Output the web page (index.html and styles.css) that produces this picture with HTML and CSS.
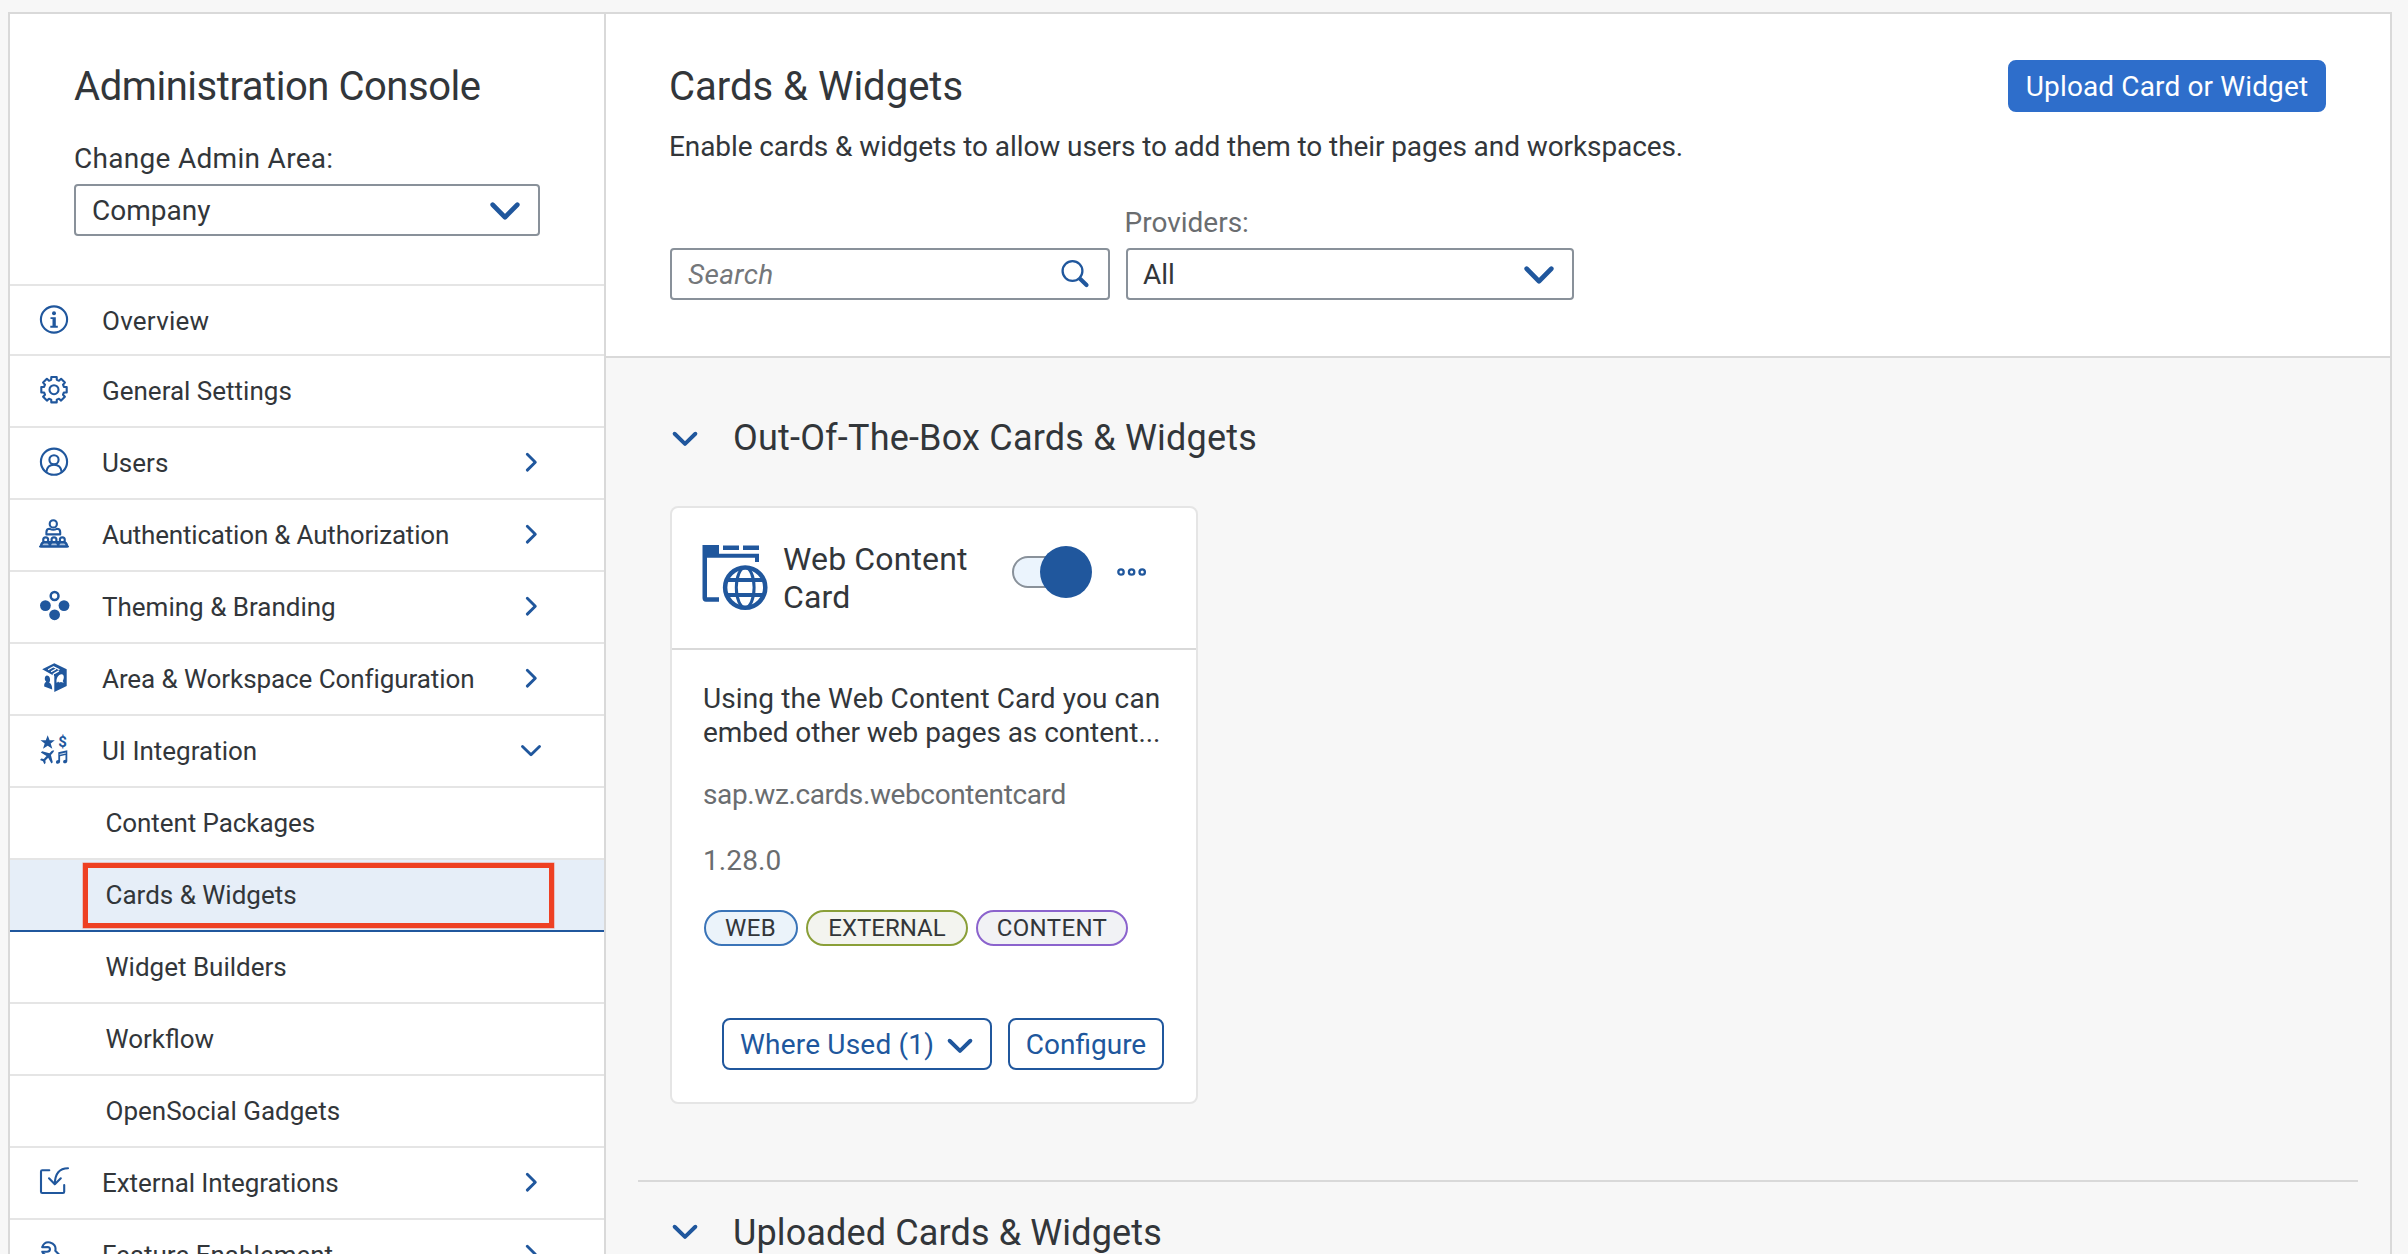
FILE: index.html
```
<!DOCTYPE html>
<html lang="en">
<head>
<meta charset="utf-8">
<title>Administration Console</title>
<link rel="stylesheet" href="styles.css">
</head>
<body>
<svg class="sprite" aria-hidden="true">
  <symbol id="chevron-down" viewBox="0 0 32 32"><path d="M7.5 12.5 16 20.8l8.500-8.300"/></symbol>
  <symbol id="chevron-right" viewBox="0 0 32 32"><path d="m12.300 8.300 8 7.900-8 7.900"/></symbol>
</svg>
<div class="shell">
  <aside class="sidebar">
    <header class="side-head">
      <h1 class="title side-title">Administration Console</h1>
      <label class="area-label">Change Admin Area:</label>
      <div class="field area-select"><span>Company</span>
        <svg class="drop"><use href="#chevron-down"/></svg></div>
    </header>
    <nav class="nav">
      <a class="item first">
        <svg class="icon" viewBox="0 0 32 32"><circle cx="16" cy="16.500" r="13.100"/><circle class="solid" cx="16" cy="10.300" r="2"/><path class="solid" d="M12.500 14.200h5.300v8.600h2v1.900h-7.500v-1.900h2.200v-6.700h-2z"/></svg>
        <span>Overview</span></a>
      <a class="item">
        <svg class="icon" viewBox="-16 -15.700 32 32"><circle r="4.500"/><path d="M9.900-2.800 12.700-2.700V2.700L9.900 2.800 9 5 10.900 7.100 7.100 10.900 5 9 2.800 9.900 2.700 12.700H-2.700L-2.800 9.900-5 9-7.100 10.900-10.900 7.100-9 5-9.900 2.800-12.700 2.700V-2.700L-9.900-2.800-9-5-10.900-7.100-7.100-10.900-5-9-2.800-9.900-2.700-12.700H2.700L2.800-9.900 5-9 7.100-10.900 10.900-7.100 9-5Z"/></svg>
        <span>General Settings</span></a>
      <a class="item">
        <svg class="icon" viewBox="0 0 32 32"><circle cx="16" cy="15.700" r="13.100"/><circle cx="16" cy="13.800" r="4.600"/><path d="M8.300 26c.6-4.500 3.600-7.200 7.700-7.200s7.100 2.700 7.700 7.200"/></svg>
        <span>Users</span><svg class="chev"><use href="#chevron-right"/></svg></a>
      <a class="item">
        <svg class="icon" viewBox="0 0 32 32"><circle cx="15.300" cy="5.900" r="3.600"/><path d="M8.400 16.400v-2.200q0-3.400 3.400-3.400 3.500 2 7 0 3.400 0 3.400 3.400v2.200z"/><path class="tint" d="M3 28.500q.3-4 3-4.500h20q2.700.5 3 4.500z"/><g class="white"><circle cx="7.700" cy="21.900" r="2.500"/><circle cx="16" cy="21.900" r="2.500"/><circle cx="24.300" cy="21.900" r="2.500"/></g><path d="M2 28.500h28M3 28c.3-3 2-4 4.700-4s4 1.300 4.200 4c.2-2.700 1.500-4 4.100-4s4 1.300 4.200 4c.2-2.700 1.500-4 4.100-4s4.400 1 4.700 4"/></svg>
        <span class="snug">Authentication &amp; Authorization</span><svg class="chev"><use href="#chevron-right"/></svg></a>
      <a class="item">
        <svg class="icon" viewBox="0 0 32 32"><circle class="thick" cx="16.600" cy="6" r="3.900"/><g class="solid"><circle cx="7.400" cy="15.600" r="5.400"/><circle cx="26" cy="15.600" r="5.400"/><circle cx="16.600" cy="24.800" r="5.400"/></g></svg>
        <span>Theming &amp; Branding</span><svg class="chev"><use href="#chevron-right"/></svg></a>
      <a class="item">
        <svg class="icon" viewBox="0 0 32 32"><path class="solid" d="M4.200 7.300 16.300 1.300l12.400 6V24L16.300 30V14z"/><path class="cut" d="m10.500 7.500 4-2.200m-1 4.200 4-2.300m-1 4.200 4-2.300M15.500 4.800l5.500 2.700M15.300 12v17"/><path class="fill-white" d="M18.800 21c-1.300-4 1.600-8.800 4.900-8.700 2.600.2 2.700 4.100 1 6.700l1 1.800-2.800-.8c-1.100.8-2.300.3-2.800-.6z"/><path class="solid" d="M6.200 24.500c-.2-2.500.5-4 2-4.700-2.300-2-1.500-6 .7-6.200 2.900-.1 4.200 4.600 2.300 7.200 2 .9 2.900 2.700 3 6.700z"/></svg>
        <span class="tight">Area &amp; Workspace Configuration</span><svg class="chev"><use href="#chevron-right"/></svg></a>
      <a class="item">
        <svg class="icon" viewBox="0 0 32 32"><path class="solid" d="m9.700 1.300 1.900 5h5.200l-4.100 3.300 1.600 5.200-4.600-3.100L5 14.800l1.700-5.200-4.200-3.300h5.300z"/><text class="dollar" x="20.300" y="12.700">$</text><path class="solid" d="M16.400 16.600c-1-.8-2.700.3-3.700 1.400l-1.300 1.300-7.200-2-1.400 1.300 5.700 3.300-2.700 3-2.500-.3-1.300 1.300 3 1.300 1.300 3 1.300-1.200-.2-2.500 2.800-2.700 3.200 5.800 1.400-1.400-1.900-7.200 1.400-1.500c1-1 2.200-2.100 1.100-2.900z"/><path class="solid" d="M20.300 18.200 29.300 16.300V27c0 1.400-1.100 2.300-2.500 2.300-2.400-.1-2.200-3.600.7-3.600V21l-5.400 1.200v5.300c0 1.400-1.200 2.300-2.600 2.200-2.300-.2-2-3.500.8-3.600z"/><path class="cut thin" d="m22 20.300 5.500-1.200"/></svg>
        <span>UI Integration</span><svg class="chev"><use href="#chevron-down"/></svg></a>
      <a class="item sub tight">Content Packages</a>
      <a class="item sub active">Cards &amp; Widgets<i class="marker"></i></a>
      <a class="item sub">Widget Builders</a>
      <a class="item sub">Workflow</a>
      <a class="item sub">OpenSocial Gadgets</a>
      <a class="item">
        <svg class="icon" viewBox="0 0 32 32"><path d="M11.300 4.300H4.200q-1.200 0-1.200 1.200v20.300q0 1.200 1.200 1.200H25q1.200 0 1.200-1.200V19M30 2.300c-8 0-13 5-13.200 15.900M11 12.300l5.800 6 6-6"/></svg>
        <span class="tight">External Integrations</span><svg class="chev"><use href="#chevron-right"/></svg></a>
      <a class="item">
        <svg class="icon" viewBox="0 0 32 32"><path d="M4.200 9.200C5.500 5.500 8.600 3.800 12 4.500c4 .9 6.300 4.200 5.300 8.300l10 10-4.500 5-10.500-10.300c-3.700.6-6.600-.8-8-3.800H9c3.700 0 4-4.500.5-4.700z"/></svg>
        <span>Feature Enablement</span><svg class="chev"><use href="#chevron-right"/></svg></a>
    </nav>
  </aside>
  <main class="main">
    <header class="main-head">
      <div class="intro">
        <h2 class="title">Cards &amp; Widgets</h2>
        <p class="lead">Enable cards &amp; widgets to allow users to add them to their pages and workspaces.</p>
        <div class="filters">
          <div class="field search"><span>Search</span>
            <svg class="glass" viewBox="0 0 32 32"><circle cx="13.500" cy="13" r="9.900"/><path d="m21.300 21 6.200 6"/></svg></div>
          <div class="provider"><label>Providers:</label>
            <div class="field"><span>All</span><svg class="drop"><use href="#chevron-down"/></svg></div></div>
        </div>
      </div>
      <button class="btn primary">Upload Card or Widget</button>
    </header>
    <section class="group">
      <h3 class="group-title ootb"><svg class="fold"><use href="#chevron-down"/></svg><span>Out-Of-The-Box Cards &amp; Widgets</span></h3>
      <article class="card">
        <header class="card-head">
          <svg class="card-icon" viewBox="0 0 66 66"><path class="solid" d="M.5 0H17v8.700h40v8.300h-4v-4.200H5v39.400h12v4.500H4Q.5 56.700.5 53zM21 .6h16V5H21zM41 .6h16V5H41z"/><g class="globe"><circle cx="43.200" cy="42.600" r="20.100"/><ellipse cx="43.200" cy="42.600" rx="8.900" ry="20.100"/><path d="M24.500 35h37.400M24.500 50h37.400"/></g></svg>
          <h4 class="card-title">Web Content<br>Card</h4>
          <span class="switch"></span>
          <svg class="dots" viewBox="0 0 32 12"><circle cx="5" cy="6" r="2.700"/><circle cx="15.600" cy="6" r="2.700"/><circle cx="26.200" cy="6" r="2.700"/></svg>
        </header>
        <div class="card-body">
          <p class="desc"><span>Using the Web Content Card you can</span><br><span class="second">embed other web pages as content...</span></p>
          <p class="meta id">sap.wz.cards.webcontentcard</p>
          <p class="meta version">1.28.0</p>
          <div class="tags"><span class="tag web">WEB</span><span class="tag external">EXTERNAL</span><span class="tag content">CONTENT</span></div>
          <div class="actions">
            <button class="btn outline used"><span>Where Used (1)</span><svg class="fold"><use href="#chevron-down"/></svg></button>
            <button class="btn outline">Configure</button>
          </div>
        </div>
      </article>
    </section>
    <section class="group divided">
      <h3 class="group-title"><svg class="fold"><use href="#chevron-down"/></svg><span>Uploaded Cards &amp; Widgets</span></h3>
    </section>
  </main>
</div>
</body>
</html>
```
FILE: styles.css
```
* { box-sizing: border-box; }
html, body { margin: 0; height: 100%; overflow: hidden; }
body {
  --blue: #20579d;
  --ink: #32363a;
  --line: #d9d9d9;
  background: #f7f7f7;
  color: var(--ink);
  font: 28px/34px Roboto, "Liberation Sans", sans-serif;
  padding: 12px 16px 0 8px;
}
h1, h2, h3, h4, p { margin: 0; font-weight: 400; }
svg { flex: none; fill: none; stroke: var(--blue); stroke-linecap: round; stroke-linejoin: round; }
.sprite { position: absolute; width: 0; height: 0; }
.solid { fill: var(--blue); stroke: none; }

.shell { display: flex; height: 1260px; border: 2px solid var(--line); border-bottom: 0; }
.sidebar { width: 596px; background: #fff; border-right: 2px solid var(--line); }
.main { flex: 1; min-width: 0; }

.title { font-size: 40px; line-height: 48px; white-space: nowrap; }
.side-head { height: 272px; padding: 49px 64px 0; border-bottom: 2px solid #e5e5e5; }
.side-title { letter-spacing: -.45px; }
.area-label { display: block; margin-top: 31px; letter-spacing: .3px; }
.field {
  display: flex; align-items: center; justify-content: space-between;
  height: 52px; padding: 0 17px 0 15px;
  background: #fff; border: 2px solid #89919a; border-radius: 4px;
}
.field span { padding-top: 1px; }
.area-select { margin-top: 8px; padding-left: 16px; }
.drop { width: 32px; height: 32px; stroke-width: 3.200; overflow: visible; transform: scale(1.450, 1.500); }

.item {
  position: relative; display: flex; align-items: center;
  height: 72px; padding: 0 57px 0 28px;
  border-bottom: 2px solid #e5e5e5;
  font-size: 26px; white-space: nowrap;
}
.item.first { height: 70px; }
.item.first span { padding-top: 2px; letter-spacing: .25px; }
.snug { letter-spacing: -.19px; }
.tight { letter-spacing: -.08px; }
.icon { width: 32px; height: 32px; margin: -2px 32px 0 0; stroke-width: 2.100; }
.thick { stroke-width: 2.500; }
.cut { stroke: #fff; stroke-width: 1.300; }
.thin { stroke-width: .8; }
.fill-white { fill: #fff; stroke: none; }
.white { fill: #fff; }
.tint { fill: #a9c1de; }
.dollar { font: 700 15px Roboto, sans-serif; fill: var(--blue); stroke: none; }
.chev { width: 32px; height: 32px; margin: -3px 0 0 auto; stroke-width: 2.900; }
.sub { padding-left: 95.500px; }
.active { background: #e6eef8; border-bottom-color: var(--blue); }
.marker {
  position: absolute; left: 73px; top: 3px; width: 470.500px; height: 65px;
  border: 5px solid #ee4023; box-shadow: 0 0 0 .5px rgba(238, 64, 35, .5);
}

.main-head {
  display: flex; justify-content: space-between; align-items: flex-start;
  height: 344px; padding: 46px 64px 0 62px;
  background: #fff; border-bottom: 2px solid var(--line);
}
.intro { padding-top: 3px; }
.intro .title, .lead { margin-left: 1px; }
.lead { margin-top: 19px; letter-spacing: -.09px; white-space: nowrap; }
.filters { display: flex; align-items: flex-end; gap: 16px; margin: 42px 0 0 2px; }
.search { width: 440px; padding: 0 17px 0 16px; color: #74777a; }
.search span { font-style: italic; letter-spacing: .35px; }
.glass { width: 32px; height: 32px; stroke-width: 2.300; }
.glass path { stroke-width: 4.200; }
.provider { width: 448px; }
.provider label { display: block; margin: 0 0 8px -1.500px; color: #6a6d70; }
.btn {
  display: flex; align-items: center; justify-content: center;
  height: 52px; padding: 1px 16px 0; border-radius: 8px; white-space: nowrap;
  font: inherit; border: 2px solid var(--blue);
}
.primary { width: 318px; background: #2e6ecb; border-color: #2e6ecb; color: #fff; letter-spacing: .13px; }
.outline { background: #fff; color: var(--blue); }

.group { margin: 0 32px; padding: 0 32px; }
.group-title { display: flex; align-items: center; font-size: 36px; line-height: 44px; letter-spacing: .13px; }
.group-title span { margin-left: 32px; }
.ootb { padding-top: 58px; letter-spacing: .2px; }
.fold { width: 32px; height: 32px; margin-left: -1px; stroke-width: 3.200; transform: scale(1.220); }
.divided { margin-top: 76px; border-top: 2px solid var(--line); padding-top: 28px; }
.divided .fold { margin-top: -3px; }
.divided span { padding-top: 1px; }

.card { width: 528px; height: 598px; margin-top: 46px; background: #fff; border: 2px solid #e5e5e5; border-radius: 8px; }
.card-head { display: flex; align-items: flex-start; height: 142px; padding: 32px 48px 0 30px; border-bottom: 2px solid var(--line); }
.card-icon { width: 66px; height: 66px; margin-top: 5px; }
.globe { stroke-width: 4.500; fill: #fff; }
.globe path { stroke-width: 4; stroke-linecap: butt; }
.globe ellipse { stroke-width: 3; fill: none; }
.card-title { margin-left: 15px; font-size: 32px; line-height: 38px; letter-spacing: .14px; }
.switch {
  position: relative; width: 72px; height: 32px; margin: 16px 8px 0 auto;
  background: #ebf4fd; border: 2px solid #89919a; border-radius: 16px;
}
.switch::after {
  content: ""; position: absolute; left: 26px; top: -12px; width: 52px; height: 52px;
  border-radius: 50%; background: var(--blue);
}
.dots { width: 32px; height: 12px; margin: 26px 0 0 24px; stroke-width: 2.300; }

.card-body { padding: 32px 32px 0 31px; }
.desc { letter-spacing: .12px; white-space: nowrap; }
.desc .second { letter-spacing: -.06px; }
.meta { color: #6a6d70; }
.id { margin-top: 28px; letter-spacing: -.38px; }
.version { margin-top: 32px; letter-spacing: .1px; }
.tags { display: flex; gap: 8px; margin: 32px 0 0 1px; }
.tag {
  height: 36px; border: 2px solid; border-radius: 18px; text-align: center;
  font-size: 24px; line-height: 32px; white-space: nowrap;
}
.tag.web { width: 94px; padding-right: 1px; border-color: #3a74b8; background: #ebf3fa; letter-spacing: .3px; }
.tag.external { width: 162px; border-color: #8a9f38; background: #f3f4ef; }
.tag.content { width: 152px; border-color: #8b63cd; background: #f1f2f5; letter-spacing: .35px; }
.actions { display: flex; justify-content: flex-end; gap: 16px; margin-top: 72px; }
.outline { width: 156px; }
.used { width: 270px; justify-content: space-between; letter-spacing: .2px; }
.used .fold { margin-right: -2px; }
```
